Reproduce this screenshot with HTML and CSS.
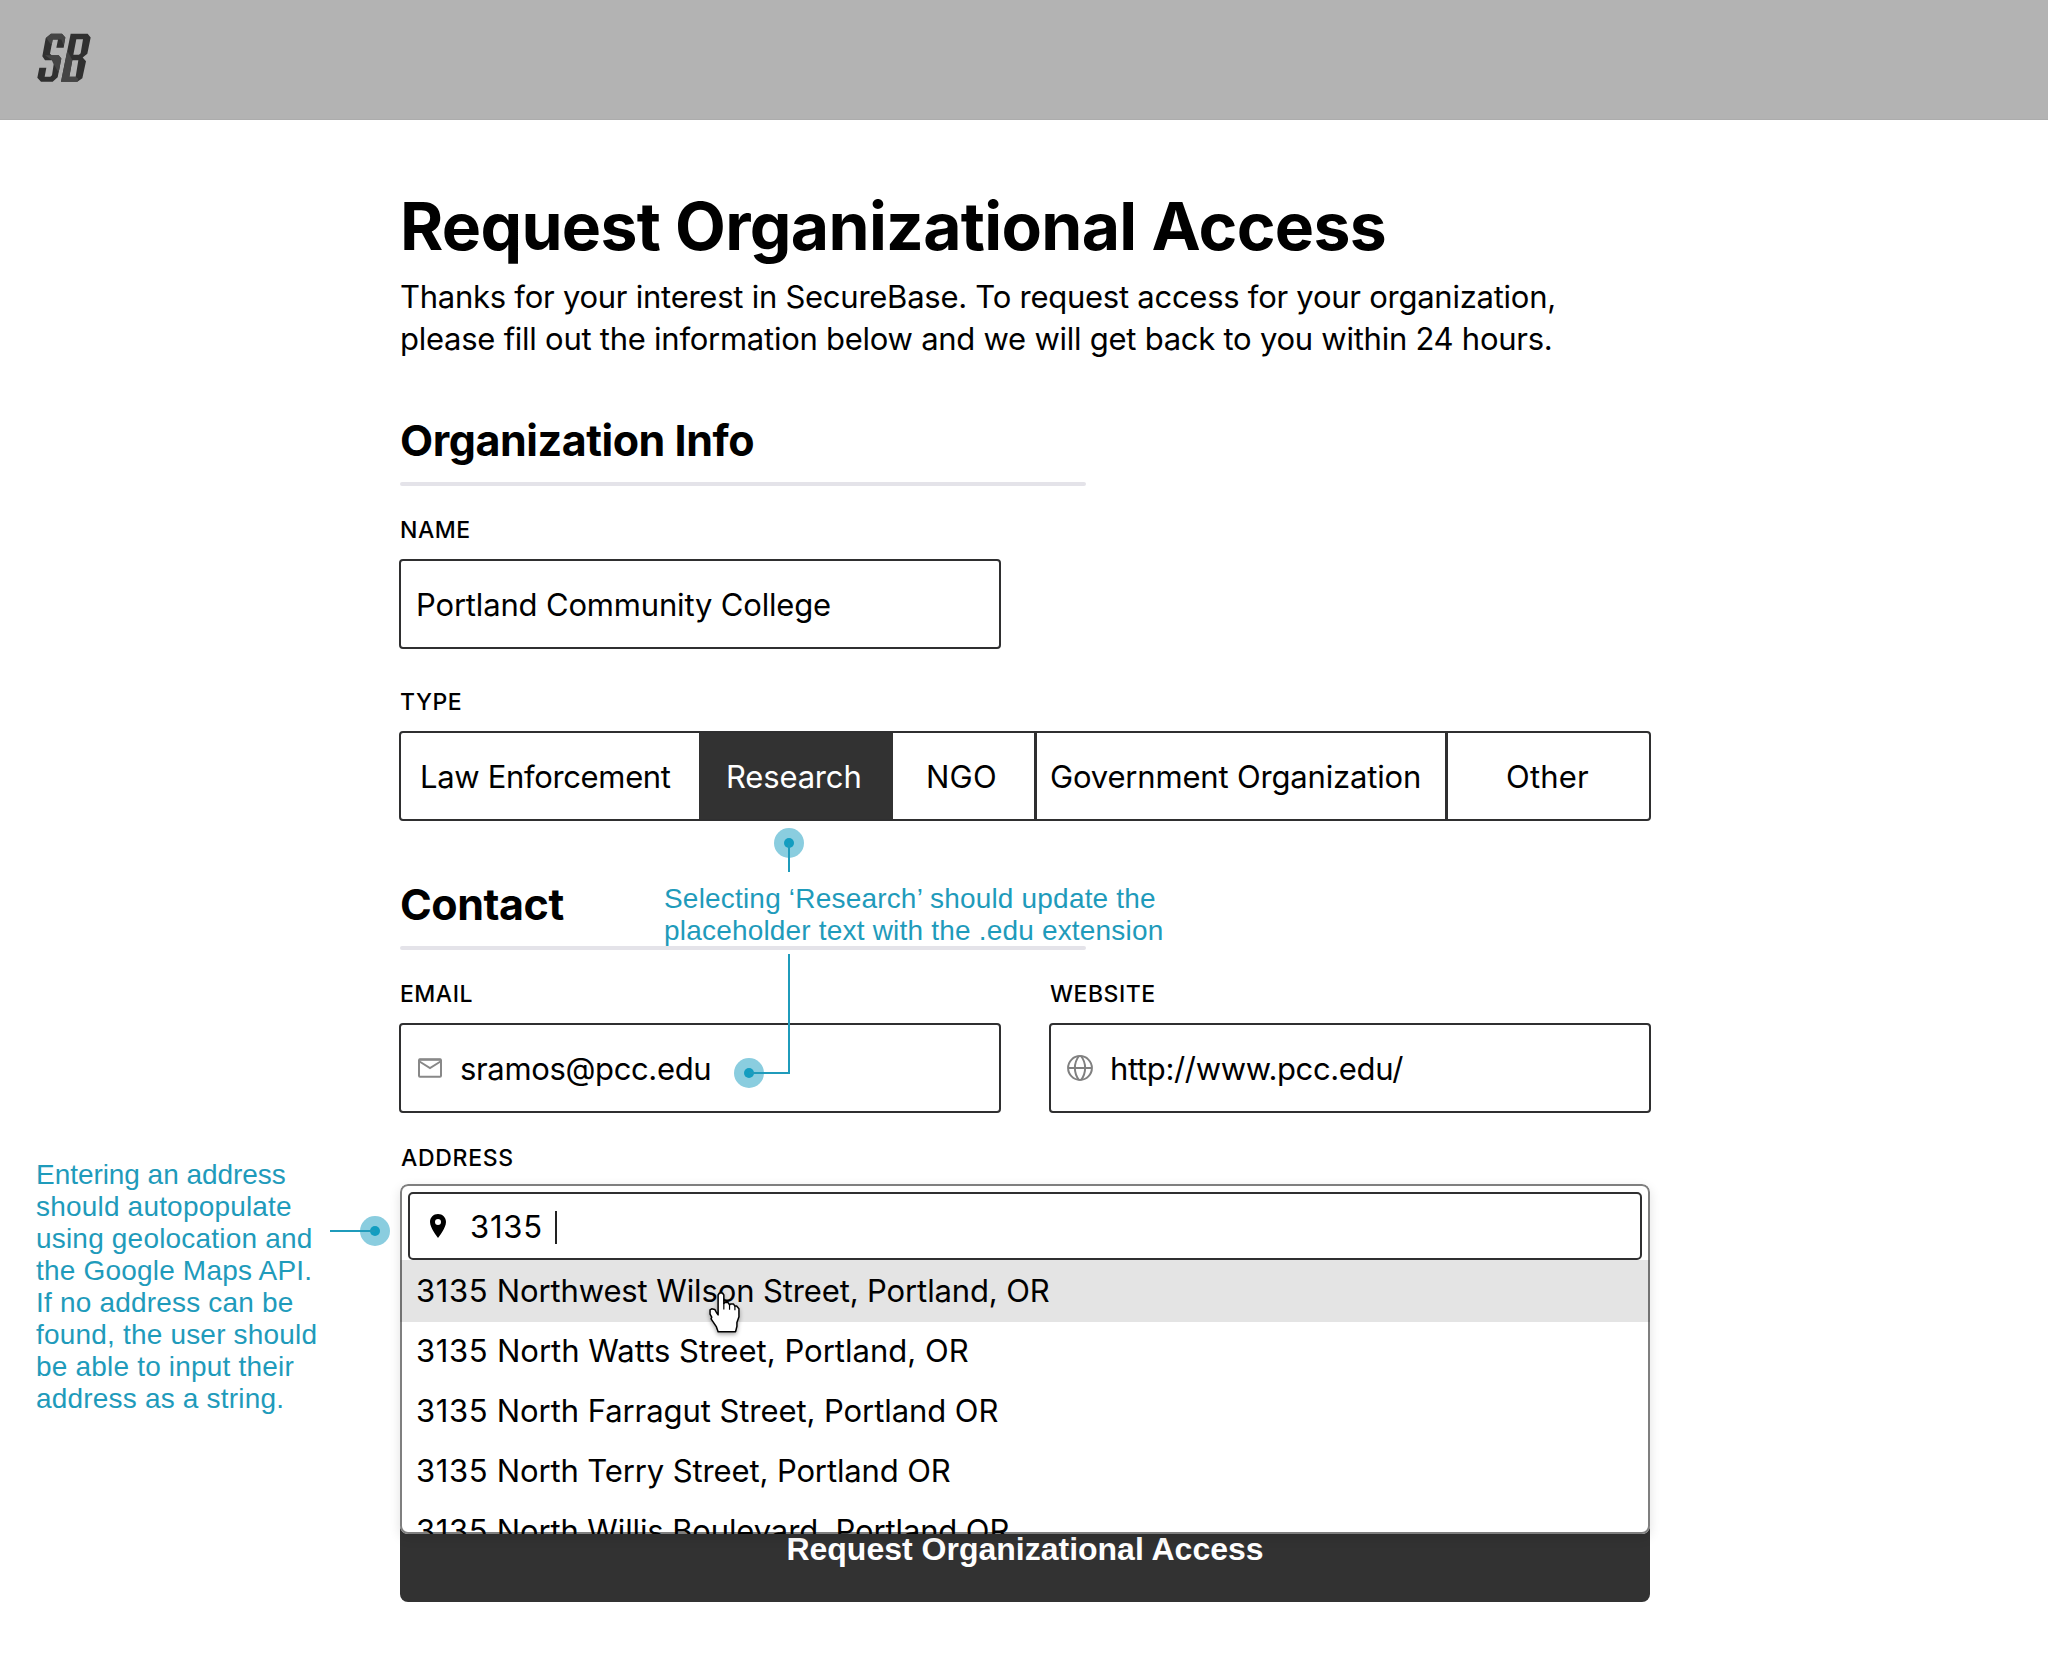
FILE: index.html
```html
<!DOCTYPE html>
<html lang="en">
<head>
  <meta charset="utf-8">
  <title>Request Organizational Access</title>
  <link rel="stylesheet" href="styles.css">
</head>
<body>
  <header class="topbar">
    <svg class="logo" viewBox="110 100 162 146" role="img" aria-label="SecureBase">
      <path fill="#303030" d="M136 115 152 102H185L195 113 190 144H168L173 119H157L149 162 154 166H175L183 176 172 232 157 246H122L111 234 117 204H138L133 231H150L155 226 161 187 155 181H134L126 169Z"/>
      <path fill="#454545" d="M137 114 152 102H185L195 113 190 137 183 119H157L154 137ZM134 166H175L183 176 175 219 157 187 155 181Z"/>
      <path fill="#303030" fill-rule="evenodd" d="M211 102H262L271 113 261 162 247 173 257 184 246 235 231 246H182ZM228 118 219 165H236L241 160 248 118ZM216 181 207 231H226L234 181Z"/>
      <path fill="#454545" d="M201 152 216 181 207 231H226L234 237 231 246H182Z"/>
    </svg>
  </header>

  <main class="page">
    <h1 class="title">Request Organizational Access</h1>
    <p class="intro">Thanks for your interest in SecureBase. To request access for your organization,<br>please fill out the information below and we will get back to you within 24 hours.</p>

    <section class="section">
      <h2 class="section-title">Organization Info</h2>
      <div class="fields">
        <div class="field">
          <div class="label">NAME</div>
          <div class="input"><span class="value">Portland Community College</span></div>
        </div>
      </div>
      <div class="field field-type">
        <div class="label">TYPE</div>
        <div class="segmented">
          <div class="segment segment-law">Law Enforcement</div>
          <div class="segment segment-research">Research</div>
          <div class="segment segment-ngo">NGO</div>
          <div class="segment segment-gov">Government Organization</div>
          <div class="segment segment-other">Other</div>
        </div>
      </div>
    </section>

    <section class="section section-contact">
      <h2 class="section-title">Contact</h2>
      <div class="fields">
        <div class="field">
          <div class="label">EMAIL</div>
          <div class="input input-icon">
            <svg class="icon-mail" viewBox="0 0 24 20" fill="none" stroke="#888" stroke-width="2">
              <rect x="1" y="1.3" width="22" height="17.4" rx="1"/>
              <path d="M1.500 3.500 12 10 22.500 3.500M1 1.800H23"/>
            </svg>
            <span class="value value-tight">sramos@pcc.edu</span>
          </div>
        </div>
        <div class="field">
          <div class="label">WEBSITE</div>
          <div class="input input-icon">
            <svg class="icon-globe" viewBox="0 0 26 26" fill="none" stroke="#808080" stroke-width="2">
              <circle cx="13" cy="13" r="11.900"/>
              <path d="M1 13H25M12 1C6.500 8 6.500 18 12 25M14 1C19.500 8 19.500 18 14 25"/>
            </svg>
            <span class="value value-tight">http://www.pcc.edu/</span>
          </div>
        </div>
      </div>
      <div class="field field-address">
        <div class="label">ADDRESS</div>
        <div class="combo">
          <div class="combo-input">
            <svg class="icon-pin" viewBox="0 0 16 24">
              <path fill-rule="evenodd" d="M8 0C3.500 0 0 3.500 0 8c0 6 8 16 8 16s8-10 8-16c0-4.500-3.500-8-8-8Zm0 5a3 3 0 1 1 0 6 3 3 0 0 1 0-6Z"/>
            </svg>
            <span class="query">3135</span>
            <span class="caret"></span>
          </div>
          <ul class="options">
            <li class="option option-active"><span class="number">3135</span> Northwest Wilson Street, Portland, OR</li>
            <li class="option option-watts"><span class="number">3135</span> North Watts Street, Portland, OR</li>
            <li class="option option-farragut"><span class="number">3135</span> North Farragut Street, Portland OR</li>
            <li class="option"><span class="number">3135</span> North Terry Street, Portland OR</li>
            <li class="option"><span class="number">3135</span> North Willis Boulevard, Portland OR</li>
          </ul>
        </div>
      </div>
    </section>

    <div class="submit">Request Organizational Access</div>
  </main>

  <p class="note note-research">Selecting ‘Research’ should update the<br>placeholder text with the .edu extension</p>
  <svg class="link link-research" viewBox="0 0 80 280" fill="none" stroke="#1f9bbb" stroke-width="2">
    <g stroke="none">
      <circle cx="59" cy="23" r="15" fill="#8acddf"/>
      <circle cx="19" cy="253" r="15" fill="#8acddf"/>
      <circle cx="59" cy="23" r="5" fill="#139dc0"/>
      <circle cx="19" cy="253" r="5" fill="#139dc0"/>
    </g>
    <path d="M59 23V52M59 134V253H19"/>
  </svg>

  <p class="note note-address"><span class="note-lead">Entering an address</span><br>should autopopulate<br>using geolocation and<br>the Google Maps API.<br>If no address can be<br>found, the user should<br>be able to input their<br>address as a string.</p>
  <svg class="link link-address" viewBox="0 0 60 30">
    <circle cx="45" cy="15" r="15" fill="#8acddf"/>
    <circle cx="45" cy="15" r="5" fill="#139dc0"/>
    <path d="M0 15H45" stroke="#1f9bbb" stroke-width="2"/>
  </svg>

  <svg class="cursor" viewBox="54 34 98 128">
    <path fill="#fff" stroke="#000" stroke-width="4.500" stroke-linejoin="round" d="M84 105V46L88 40H97L101 46V71L104 68H113L118 75 121 73H130L134 79 139 79 146 87V111L140 128V139L136 155H84L79 141 63 117 65 112 60 103V90L65 87 74 89 79 98Z"/>
    <path fill="none" stroke="#000" stroke-width="3.500" d="M101 70V89M118 75V90M134 79V91"/>
  </svg>
</body>
</html>
```
FILE: styles.css
```css
* {
  box-sizing: border-box;
}

body {
  position: relative;
  margin: 0;
  width: 2048px;
  height: 1660px;
  overflow: hidden;
  background: #fff;
  color: #000;
  font-family: Inter, "Liberation Sans", sans-serif;
  font-size: 31px;
}

h1, h2, p, ul {
  margin: 0;
  padding: 0;
}

/* Header */
.topbar {
  height: 120px;
  padding: 33px 0 0 37px;
  background: #b3b3b3;
  border-bottom: 1px solid #acacac;
}

.logo {
  display: block;
  width: 54px;
  height: 49px;
}

/* Page column */
.page {
  width: 1250px;
  margin-left: 400px;
  padding-top: 66px;
}

.title {
  font-size: 66px;
  font-weight: 700;
  line-height: 80px;
  letter-spacing: -0.69px;
  white-space: nowrap;
}

.intro {
  margin-top: 10px;
  line-height: 42px;
  letter-spacing: -0.255px;
  white-space: nowrap;
}

.section {
  margin-top: 54px;
}

.section-contact {
  margin-top: 57px;
}

.section-title {
  font-size: 43px;
  font-weight: 700;
  line-height: 52px;
  letter-spacing: -0.45px;
}

.section-title::after {
  content: "";
  display: block;
  width: 686px;
  height: 4px;
  margin-top: 16px;
  border-radius: 2px;
  background: #e4e3e9;
}

/* Fields */
.fields {
  display: grid;
  grid-template-columns: 602px 602px;
  column-gap: 48px;
  margin: 30px -1px 0;
}

.label {
  padding-left: 1px;
  margin-bottom: 15px;
  font-size: 23px;
  font-weight: 500;
  line-height: 28px;
  letter-spacing: 0.5px;
}

.field-type {
  margin: 39px -1px 0;
}

.field-address {
  margin-top: 31px;
}

.field-address .label {
  margin-bottom: 12px;
  letter-spacing: 0.68px;
}

.input {
  display: flex;
  align-items: center;
  height: 90px;
  padding: 1px 15px 0;
  border: 2px solid #2f2f30;
  border-radius: 4px;
}

.input-icon {
  padding-left: 16px;
}

.value {
  letter-spacing: -0.17px;
}

.value-tight {
  letter-spacing: -0.355px;
}

.icon-mail {
  width: 24px;
  height: 20px;
  margin: 0 18px 2px 1px;
}

.icon-globe {
  width: 26px;
  height: 26px;
  margin: 0 17px 2px 0;
}

/* Organization type */
.segmented {
  display: grid;
  grid-template-columns: 298px 194px 144px 411px 201px;
  height: 90px;
  border: 2px solid #2f2f30;
  border-radius: 4px;
}

.segment {
  display: flex;
  align-items: center;
  padding-top: 1px;
  letter-spacing: -0.17px;
  white-space: nowrap;
}

.segment-law {
  padding-left: 19px;
  letter-spacing: -0.34px;
}

.segment-research {
  padding-left: 27px;
  background: #323232;
  color: #fff;
}

.segment-ngo {
  padding-left: 33px;
  border-right: 3px solid #2f2f30;
  letter-spacing: 0.2px;
}

.segment-gov {
  padding-left: 13px;
  border-right: 3px solid #2f2f30;
}

.segment-other {
  padding-left: 58px;
  letter-spacing: 0.2px;
}

/* Address autocomplete */
.combo {
  position: relative;
  z-index: 1;
  height: 350px;
  margin-bottom: -38px;
  padding-top: 8px;
  overflow: hidden;
  border-radius: 8px;
  background: #fff;
  box-shadow: 0 4px 12px rgba(0, 0, 0, 0.12);
}

.combo::after {
  content: "";
  position: absolute;
  inset: 0;
  border: 2px solid rgba(0, 0, 0, 0.5);
  border-radius: 8px;
}

.combo-input {
  display: flex;
  align-items: center;
  height: 68px;
  margin: 0 8px;
  padding-left: 20px;
  border: 2px solid #2f2f30;
  border-radius: 5px;
}

.icon-pin {
  width: 16px;
  height: 24px;
}

.query {
  margin-left: 24px;
  letter-spacing: 0.8px;
}

.caret {
  width: 2px;
  height: 33px;
  margin: 2px 0 0 12px;
  background: #222;
}

.options {
  list-style: none;
}

.option {
  height: 60px;
  padding-left: 16px;
  line-height: 60px;
  letter-spacing: -0.12px;
  white-space: nowrap;
}

.option-active {
  height: 62px;
  margin-bottom: -1px;
  line-height: 62px;
  background: #e4e4e4;
}

.option-watts {
  letter-spacing: 0.02px;
}

.option-farragut {
  letter-spacing: -0.07px;
}

.number {
  letter-spacing: 0.6px;
}

.submit {
  height: 106px;
  border-radius: 8px;
  background: #323232;
  color: #fff;
  font: 700 32px/106px "Liberation Sans", sans-serif;
  text-align: center;
}

/* Annotations */
.note {
  position: absolute;
  color: #1f9bbb;
  font: 400 28px/32px "Liberation Sans", sans-serif;
  letter-spacing: 0.19px;
  white-space: nowrap;
}

.note-research {
  left: 664px;
  top: 883px;
}

.note-address {
  left: 36px;
  top: 1159px;
}

.note-lead {
  letter-spacing: -0.05px;
}

.link {
  position: absolute;
}

.link-research {
  left: 730px;
  top: 820px;
  width: 80px;
  height: 280px;
}

.link-address {
  left: 330px;
  top: 1216px;
  width: 60px;
  height: 30px;
  z-index: 2;
}

.cursor {
  position: absolute;
  z-index: 3;
  left: 708px;
  top: 1291px;
  width: 33px;
  height: 43px;
  overflow: visible;
  filter: drop-shadow(0 2px 2px rgba(0, 0, 0, 0.35));
}
```
